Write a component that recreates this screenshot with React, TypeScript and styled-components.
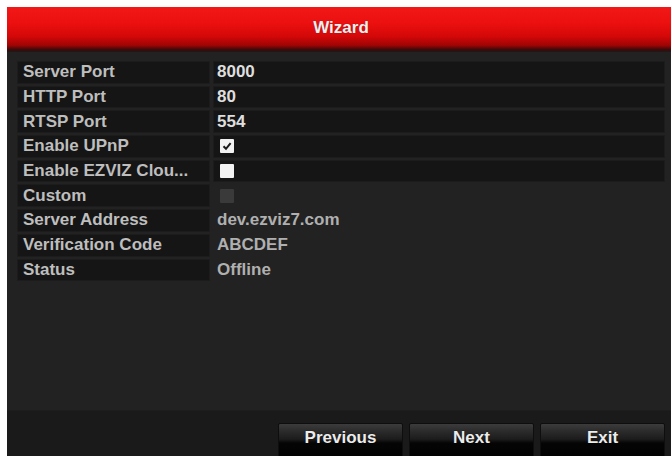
import * as React from 'react';
import styled, { createGlobalStyle } from 'styled-components';

const GlobalStyle = createGlobalStyle`
    html, body {
        margin: 0;
        padding: 0;
        background: #ffffff;
        overflow: hidden;
    }
`;

const FONT = `"Liberation Sans", Arial, sans-serif`;

interface Field {
    label: string;
    value?: string;
    check?: 'on' | 'off' | 'disabled';
    boxed: boolean;
}

const FIELDS: Field[] = [
    {label: 'Server Port', value: '8000', boxed: true},
    {label: 'HTTP Port', value: '80', boxed: true},
    {label: 'RTSP Port', value: '554', boxed: true},
    {label: 'Enable UPnP', check: 'on', boxed: true},
    {label: 'Enable EZVIZ Clou...', check: 'off', boxed: true},
    {label: 'Custom', check: 'disabled', boxed: false},
    {label: 'Server Address', value: 'dev.ezviz7.com', boxed: false},
    {label: 'Verification Code', value: 'ABCDEF', boxed: false},
    {label: 'Status', value: 'Offline', boxed: false},
];

const Screen = styled.div`
    padding: 7px 0 0 7px;
    height: 456px;
    box-sizing: border-box;
    overflow: hidden;
    font-family: ${FONT};
`;

const Window = styled.div`
    width: 668px;
    height: 456px;
    display: flex;
    flex-direction: column;
    background: #222222;
`;

const TitleBar = styled.div`
    height: 45px;
    display: flex;
    align-items: center;
    justify-content: center;
    padding-bottom: 3px;
    box-sizing: border-box;
    background: linear-gradient(
        to bottom,
        #f21818 0%,
        #ec1010 35%,
        #d40808 65%,
        #a00404 85%,
        #3a0a0a 95%,
        #1e1a1a 100%
    );
    color: #f0f0f0;
    font-size: 17px;
    font-weight: bold;
    text-shadow: 0 0 1px rgba(0, 0, 0, 0.4);
`;

const Body = styled.div`
    flex: 1;
    padding: 9px 10px 0 10px;
`;

const Table = styled.div`
    display: grid;
    grid-template-columns: 193px 1fr;
    column-gap: 3px;
    row-gap: 2px;
    grid-auto-rows: 22.7px;
`;

const Label = styled.div`
    display: flex;
    align-items: center;
    padding-left: 6px;
    background: #151515;
    box-shadow: inset 0 0 0 1px #1c1c1c;
    color: #bebebe;
    font-size: 17px;
    font-weight: bold;
    white-space: nowrap;
    overflow: hidden;
`;

const Value = styled.div<{ $boxed: boolean }>`
    display: flex;
    align-items: center;
    padding-left: 4px;
    background: ${p => (p.$boxed ? '#151515' : 'transparent')};
    box-shadow: ${p => (p.$boxed ? 'inset 0 0 0 1px #1c1c1c' : 'none')};
    color: ${p => (p.$boxed ? '#dedede' : '#b0b0b0')};
    font-size: 17px;
    font-weight: bold;
`;

const Box = styled.div<{ $state: 'on' | 'off' | 'disabled' }>`
    width: 14px;
    height: 14px;
    margin-left: 3px;
    display: flex;
    align-items: center;
    justify-content: center;
    background: ${p => (p.$state === 'disabled' ? '#3a3a3a' : '#f2f2f2')};
    border-radius: 1px;
`;

const Footer = styled.div`
    height: 53px;
    display: flex;
    justify-content: flex-end;
    align-items: flex-start;
    gap: 6px;
    padding: 12px 10px 0 0;
    background: #1a1a1a;
    border-top: 1px solid #1d1d1d;
    box-sizing: border-box;
`;

const Button = styled.div`
    width: 125px;
    height: 40px;
    box-sizing: border-box;
    text-align: center;
    line-height: 27px;
    color: #ececec;
    font-size: 17px;
    font-weight: bold;
    border: 1px solid #0e0e0e;
    border-radius: 2px;
    background: linear-gradient(
        to bottom,
        #3c3c3c 0%,
        #2c2c2c 18%,
        #1c1c1c 40%,
        #050505 50%,
        #000000 100%
    );
    text-shadow: 0 0 1px rgba(0, 0, 0, 0.8);
`;

const Check: React.FC = () => (
    <svg width="10" height="10" viewBox="0 0 10 10">
        <path d="M1.5 5.2 L4 7.8 L8.6 2.2" fill="none" stroke="#1a1a1a" strokeWidth="2" />
    </svg>
);

const App: React.FC = () => {
    return (
        <Screen>
            <GlobalStyle />
            <Window>
                <TitleBar>Wizard</TitleBar>
                <Body>
                    <Table>
                        {FIELDS.map(f => (
                            <React.Fragment key={f.label}>
                                <Label>{f.label}</Label>
                                <Value $boxed={f.boxed}>
                                    {f.check ? (
                                        <Box $state={f.check}>{f.check === 'on' && <Check />}</Box>
                                    ) : (
                                        f.value
                                    )}
                                </Value>
                            </React.Fragment>
                        ))}
                    </Table>
                </Body>
                <Footer>
                    <Button>Previous</Button>
                    <Button>Next</Button>
                    <Button>Exit</Button>
                </Footer>
            </Window>
        </Screen>
    );
};

export default App;
